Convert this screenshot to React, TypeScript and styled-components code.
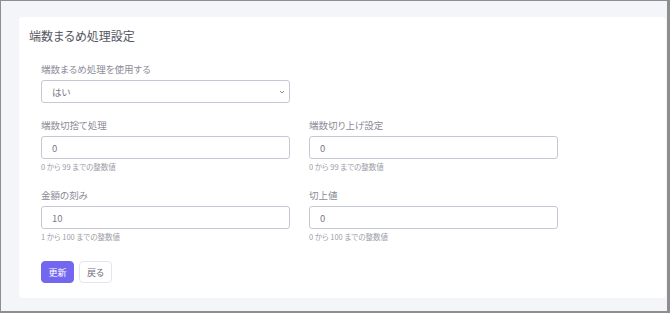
import React from 'react';
import styled, { createGlobalStyle } from 'styled-components';

const GlobalStyle = createGlobalStyle`
  html, body {
    margin: 0;
    padding: 0;
    background: #ffffff;
  }
  body {
    font-family: "Noto Sans CJK JP", "Noto Sans", sans-serif;
    font-feature-settings: "palt";
  }
`;

const Frame = styled.div`
  width: 670px;
  height: 313px;
  box-sizing: border-box;
  border: 1px solid #8e8e8e;
  border-right-width: 3px;
  border-bottom-width: 2px;
  background: #f4f5f9;
  padding: 16px 1px 13px 18px;
`;

const Card = styled.div`
  height: 100%;
  box-sizing: border-box;
  background: #ffffff;
  border-radius: 4px;
  padding: 10px 10px 0 10px;
`;

const Title = styled.h2`
  margin: 0;
  font-size: 12px;
  font-weight: 400;
  line-height: 18px;
  color: #55555f;
`;

const Form = styled.div`
  padding: 17px 12px 0 12px;
  display: grid;
  grid-template-columns: 249px 249px;
  column-gap: 19px;
`;

const Field = styled.div<{ $span?: boolean }>`
  grid-column: ${p => (p.$span ? '1 / 2' : 'auto')};
  display: flex;
  flex-direction: column;
  margin-bottom: ${p => (p.$span ? '15px' : '16px')};
`;

const Label = styled.label`
  font-size: 9.5px;
  line-height: 14px;
  color: #8c8c97;
  margin-bottom: 4px;
`;

const Input = styled.div`
  height: 23px;
  box-sizing: border-box;
  border: 1px solid #c8c7d6;
  border-radius: 3px;
  padding: 0 4px 0 10px;
  display: flex;
  align-items: center;
  justify-content: space-between;
  font-size: 9.5px;
  color: #7a7887;
`;

const Help = styled.div`
  font-size: 7.5px;
  line-height: 10px;
  color: #9d9da7;
  margin-top: 3px;
`;

const Buttons = styled.div`
  grid-column: 1 / 3;
  display: flex;
  gap: 5px;
  margin-top: 3px;
`;

const Button = styled.button<{ $primary?: boolean }>`
  height: 22px;
  width: 33px;
  padding: 0;
  border-radius: 4px;
  font-family: inherit;
  font-feature-settings: "palt";
  font-size: 9px;
  cursor: pointer;
  border: 1px solid ${p => (p.$primary ? '#7367f0' : '#e2e6f0')};
  background: ${p => (p.$primary ? '#7367f0' : '#ffffff')};
  color: ${p => (p.$primary ? '#ffffff' : '#6e6b7b')};
`;

const Chevron = () => (
  <svg width="6" height="4" viewBox="0 0 6 4">
    <path d="M1 1l2 2 2-2" fill="none" stroke="#8a8896" strokeWidth="1" />
  </svg>
);

const fields = [
  { label: '端数切捨て処理', value: '0', help: '0 から 99 までの整数値' },
  { label: '端数切り上げ設定', value: '0', help: '0 から 99 までの整数値' },
  { label: '金額の刻み', value: '10', help: '1 から 100 までの整数値' },
  { label: '切上値', value: '0', help: '0 から 100 までの整数値' }
];

const App = () => {
  return (
    <>
      <GlobalStyle />
      <Frame>
        <Card>
          <Title>端数まるめ処理設定</Title>
          <Form>
            <Field $span>
              <Label>端数まるめ処理を使用する</Label>
              <Input>
                <span>はい</span>
                <Chevron />
              </Input>
            </Field>
            <div />
            {fields.map(f => (
              <Field key={f.label}>
                <Label>{f.label}</Label>
                <Input>{f.value}</Input>
                <Help>{f.help}</Help>
              </Field>
            ))}
            <Buttons>
              <Button $primary>更新</Button>
              <Button>戻る</Button>
            </Buttons>
          </Form>
        </Card>
      </Frame>
    </>
  );
};

export default App;
